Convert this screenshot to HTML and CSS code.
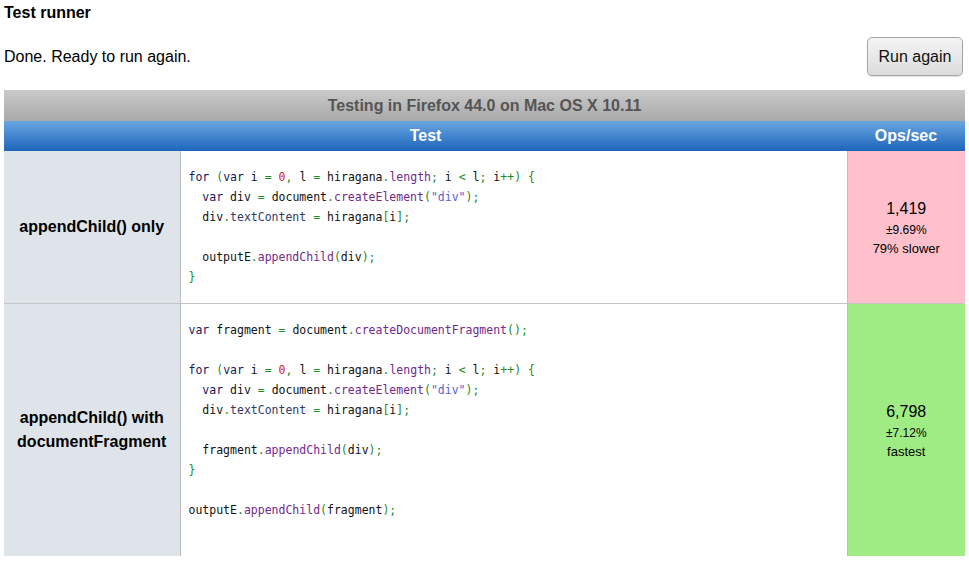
FILE: index.html
```html
<!DOCTYPE html>
<html>
<head>
<meta charset="utf-8">
<link rel="stylesheet" href="styles.css">
</head>
<body>
<h1 class="title">Test runner</h1>
<div class="status-row">
  <p class="status">Done. Ready to run again.</p>
  <button class="run-btn">Run again</button>
</div>
<table class="results">
  <colgroup>
    <col class="col-label">
    <col class="col-code">
    <col class="col-ops">
  </colgroup>
  <thead>
    <tr class="caption-row"><th colspan="3">Testing in Firefox 44.0 on Mac OS X 10.11</th></tr>
    <tr class="head-row"><th colspan="2">Test</th><th class="ops-head">Ops/sec</th></tr>
  </thead>
  <tbody>
    <tr>
      <th class="label">appendChild() only</th>
      <td class="code"><pre><span class="k">for</span> <span class="p">(</span><span class="k">var</span> i <span class="p">=</span> <span class="n">0</span><span class="p">,</span> l <span class="p">=</span> hiragana<span class="p">.</span><span class="m">length</span><span class="p">;</span> i <span class="p">&lt;</span> l<span class="p">;</span> i<span class="p">++)</span> <span class="p">{</span>
  <span class="k">var</span> div <span class="p">=</span> document<span class="p">.</span><span class="m">createElement</span><span class="p">(</span><span class="s">"div"</span><span class="p">);</span>
  div<span class="p">.</span><span class="a">textContent</span> <span class="p">=</span> hiragana<span class="p">[</span>i<span class="p">];</span>

  outputE<span class="p">.</span><span class="m">appendChild</span><span class="p">(</span>div<span class="p">);</span>
<span class="p">}</span></pre></td>
      <td class="ops slow"><span class="num">1,419</span><span class="rme">±9.69%</span><span class="cmp">79% slower</span></td>
    </tr>
    <tr>
      <th class="label">appendChild() with documentFragment</th>
      <td class="code"><pre><span class="k">var</span> fragment <span class="p">=</span> document<span class="p">.</span><span class="m">createDocumentFragment</span><span class="p">();</span>

<span class="k">for</span> <span class="p">(</span><span class="k">var</span> i <span class="p">=</span> <span class="n">0</span><span class="p">,</span> l <span class="p">=</span> hiragana<span class="p">.</span><span class="m">length</span><span class="p">;</span> i <span class="p">&lt;</span> l<span class="p">;</span> i<span class="p">++)</span> <span class="p">{</span>
  <span class="k">var</span> div <span class="p">=</span> document<span class="p">.</span><span class="m">createElement</span><span class="p">(</span><span class="s">"div"</span><span class="p">);</span>
  div<span class="p">.</span><span class="a">textContent</span> <span class="p">=</span> hiragana<span class="p">[</span>i<span class="p">];</span>

  fragment<span class="p">.</span><span class="m">appendChild</span><span class="p">(</span>div<span class="p">);</span>
<span class="p">}</span>

outputE<span class="p">.</span><span class="m">appendChild</span><span class="p">(</span>fragment<span class="p">);</span>

</pre></td>
      <td class="ops fast"><span class="num">6,798</span><span class="rme">±7.12%</span><span class="cmp">fastest</span></td>
    </tr>
  </tbody>
</table>
</body>
</html>
```
FILE: styles.css
```css
html, body {
  margin: 0;
  padding: 0;
  background: #fff;
}
body {
  padding: 4px;
  font-family: "Liberation Sans", Arial, Helvetica, sans-serif;
  color: #000;
}
.title {
  margin: 0;
  font-size: 16px;
  font-weight: bold;
  line-height: 18px;
}
.status-row {
  display: flex;
  align-items: center;
  justify-content: space-between;
  margin-top: 15px;
  margin-right: 2px;
}
.status {
  margin: 0;
  font-size: 16px;
  line-height: 20px;
}
.run-btn {
  width: 96px;
  height: 39px;
  font-family: "Liberation Sans", Arial, sans-serif;
  font-size: 16px;
  color: #111;
  border: 1px solid #a5a5a5;
  border-radius: 5px;
  background: linear-gradient(#f4f4f4, #dcdcdc);
  box-shadow: 0 1px 1px rgba(0,0,0,0.12);
  padding: 0;
}
.results {
  width: 100%;
  margin-top: 14px;
  border-collapse: collapse;
  table-layout: fixed;
}
.col-label { width: 176px; }
.col-ops { width: 118px; }
.results th, .results td {
  padding: 0;
}
.caption-row th {
  height: 31px;
  background: linear-gradient(#cacaca, #a9a9a9);
  color: #555;
  font-size: 16px;
  font-weight: bold;
  text-align: center;
}
.head-row th {
  height: 30px;
  background: linear-gradient(#69a6e2, #1d65ba);
  color: #fff;
  font-size: 16px;
  font-weight: bold;
  text-align: center;
}
.results tbody tr {
  border-bottom: 1px solid #c4c4c4;
}
.results tbody tr:last-child {
  border-bottom: none;
}
.label {
  background: #dee4ea;
  font-size: 16px;
  font-weight: bold;
  line-height: 24px;
  text-align: center;
  vertical-align: middle;
  border-right: 1px solid #bdbdbd;
}
.code {
  vertical-align: top;
  border-right: 1px solid #bdbdbd;
}
.code pre {
  margin: 0;
  padding: 16px 8px;
  font-family: "DejaVu Sans Mono", monospace;
  font-size: 11.5px;
  line-height: 20px;
  color: #111;
}
.k { color: #16165e; }
.p { color: #1f8a1f; }
.n { color: #e0201a; }
.m { color: #74288a; }
.a { color: #333a66; }
.s { color: #5a62c8; }
.ops {
  text-align: center;
  vertical-align: middle;
}
.ops span {
  display: block;
}
.ops .num {
  font-size: 16px;
  line-height: 22px;
  padding-top: 2px;
}
.ops .rme {
  font-size: 12px;
  line-height: 20px;
}
.ops .cmp {
  font-size: 13px;
  line-height: 18px;
}
.slow { background: #ffc0cb; }
.fast { background: #9fec84; }
```
